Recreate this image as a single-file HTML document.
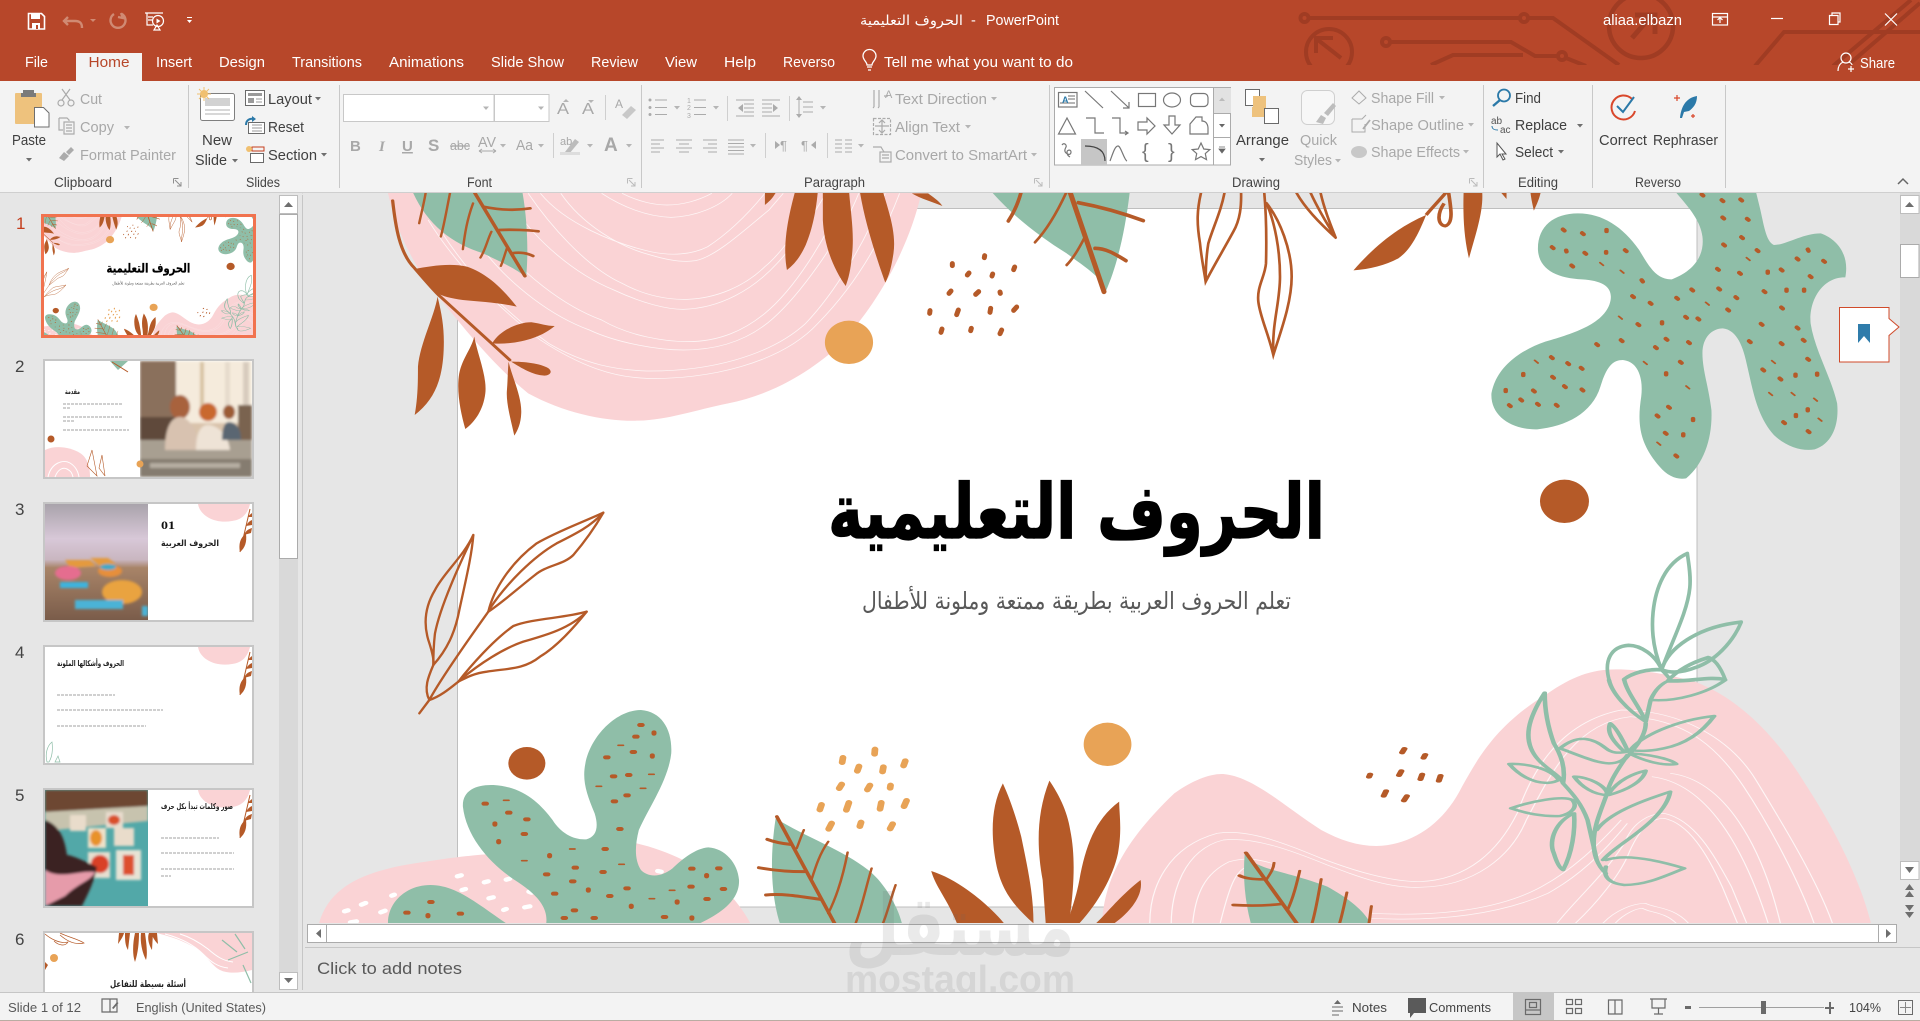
<!DOCTYPE html>
<html lang="en"><head><meta charset="utf-8"><title>PowerPoint</title>
<style>
html,body{margin:0;padding:0;width:1920px;height:1021px;overflow:hidden;background:#e6e6e6}
svg{display:block}
text{font-family:"Liberation Sans","DejaVu Sans",sans-serif;font-size:14.5px}
.w{fill:#fff}.k{fill:#404040}.g{fill:#a8a8a8}.l{font-size:13.5px;fill:#444}.s{font-size:13px;fill:#595959}
.ar{font-family:"DejaVu Sans",sans-serif}
.c{fill:#6e6e6e}.cg{fill:#b5b5b5}
.ig{fill:none;stroke:#ababab;stroke-width:1.2}
.ik{fill:none;stroke:#6a6a6a;stroke-width:1.2}
.gal{fill:none;stroke:#777;stroke-width:1.2}
</style></head><body>
<svg width="1920" height="1021" viewBox="0 0 1920 1021" xmlns="http://www.w3.org/2000/svg">
<defs>
<clipPath id="cMain"><rect x="303" y="193" width="1597" height="730"/></clipPath>
<clipPath id="cT1"><rect x="44" y="217" width="209" height="118"/></clipPath>
<clipPath id="cT6"><rect x="45" y="933" width="207" height="59"/></clipPath>
<clipPath id="cP2"><rect x="140" y="361" width="112" height="116"/></clipPath>
<clipPath id="cP3"><rect x="45" y="504" width="103" height="116"/></clipPath>
<clipPath id="cP5"><rect x="45" y="790" width="103" height="116"/></clipPath>
<filter id="bl" x="-10%" y="-10%" width="120%" height="120%"><feGaussianBlur stdDeviation="1.3"/></filter>
<linearGradient id="p3" x1="0" y1="0" x2="0" y2="1"><stop offset="0" stop-color="#a9a3ab"/><stop offset=".3" stop-color="#d8c8d8"/><stop offset=".48" stop-color="#c9b6c0"/><stop offset=".55" stop-color="#a88468"/><stop offset="1" stop-color="#7a5c4a"/></linearGradient>
<g id="corner">
<path d="M198 0C200 12 215 20 232 17C240 16 247 12 250 0Z" fill="#fad3d5"/>
<path d="M250 5L240 48" stroke="#b55a28" stroke-width="1" fill="none"/>
<path d="M240 48C238 38 242 32 246 30C247 38 245 44 240 48ZM244 31C246 26 249 25 252 24L251 29ZM246 22C248 18 250 17 252 16L252 21ZM248 13C249 11 251 10 252 9L252 13Z" fill="#b55a28"/>
</g>
<g id="art">
<!-- top-left -->
<g transform="translate(320,190) scale(.40816,.33333)">
<path d="M165 0C185 120 230 230 290 320C350 410 420 520 510 610C600 670 700 695 780 692C850 690 920 660 1000 640C1100 615 1180 560 1250 490C1340 390 1440 200 1475 0Z" fill="#fad3d5"/>
<g fill="none" stroke="#fff" stroke-width="2.2" opacity=".8">
<path d="M265 90C320 200 420 340 540 450C640 530 720 562 800 565C950 570 1130 520 1220 400C1300 300 1370 170 1420 10"/>
<path d="M300 130C380 280 470 380 560 460C650 525 730 540 800 543C950 545 1100 500 1190 400C1260 310 1330 170 1385 10"/>
<path d="M400 180C470 290 570 380 660 420C730 460 830 480 890 480C990 480 1060 440 1110 385C1170 320 1270 160 1320 10"/>
<path d="M420 130C490 250 600 350 690 390C760 440 850 455 900 455C980 455 1040 420 1090 370C1160 300 1240 150 1285 10"/>
<path d="M480 60C530 150 620 250 720 300C790 340 850 358 890 358C980 355 1060 300 1120 220C1160 170 1210 70 1240 10"/>
<path d="M510 10C560 100 650 230 740 280C800 320 860 330 900 328C970 325 1040 290 1090 230C1130 190 1190 90 1215 10"/>
<path d="M590 10C640 100 730 170 810 195C850 210 890 218 920 212C970 200 1040 120 1100 60L1135 10"/>
<path d="M540 10C600 100 720 160 810 185C860 198 910 195 950 170C1000 130 1050 70 1090 10"/>
<path d="M690 10C740 50 800 80 860 82C920 80 980 50 1010 10"/>
<path d="M740 10C780 35 820 45 850 45C890 45 930 30 960 10"/>
</g>
<path d="M225 0C260 100 320 160 400 190C440 215 480 235 505 262C510 200 510 100 495 0Z" fill="#8fbea8"/>
<g fill="none" stroke="#b55a28" stroke-linecap="round">
<path d="M375 0L502 258" stroke-width="9"/>
<path d="M400 50C440 60 480 62 515 55M440 120C470 118 510 120 535 124M470 190C490 185 510 190 522 198" stroke-width="8"/>
<path d="M375 40C360 90 355 130 350 178M420 125C410 150 405 180 393 203M458 175C452 195 448 215 443 228M320 0C310 60 305 100 296 140M260 0C255 40 248 70 243 100" stroke-width="6"/>
<path d="M178 32C185 110 195 190 232 235C260 275 285 310 295 320L465 510" stroke-width="8"/>
</g>
<g fill="#b55a28">
<path d="M232 237C270 228 320 218 360 230C410 250 450 300 482 350C440 338 390 335 350 330C320 325 300 318 288 310Z"/>
<path d="M288 320C300 380 305 420 303 480C300 570 280 630 232 675C240 620 240 570 240 530C245 460 280 380 288 320Z"/>
<path d="M378 440C385 490 410 560 405 610C400 660 380 695 356 717C345 670 335 610 340 560C345 510 370 480 378 440Z"/>
<path d="M462 515C470 560 495 620 493 670C492 700 485 720 476 737C470 700 455 640 458 600C460 570 460 540 462 515Z"/>
<path d="M422 460C440 420 490 395 520 397C540 400 555 408 575 408C540 445 480 465 422 460Z"/>
<path d="M468 515C500 515 540 520 560 535C570 545 565 555 550 557C520 555 495 535 468 515Z"/>
<path d="M1090 0L1120 0C1110 25 1100 35 1090 45Z"/>
<path d="M1165 0L1220 0C1215 70 1205 120 1190 165C1175 205 1160 225 1144 240C1135 180 1140 110 1165 0Z"/>
<path d="M1232 0L1296 0C1300 70 1310 130 1303 200C1300 240 1295 265 1288 288C1260 240 1235 170 1232 90Z"/>
<path d="M1322 0L1378 0C1395 70 1412 130 1405 190C1400 230 1395 255 1385 278C1365 210 1335 100 1322 0Z"/>
<path d="M1450 10L1490 10C1500 20 1515 30 1525 48C1500 35 1470 25 1450 10Z"/>
</g>
<ellipse cx="1296" cy="457" rx="59" ry="65" fill="#e8a356"/>
</g>
<!-- top-middle -->
<g transform="translate(940,190) scale(.33333)">
<path d="M150 0C220 80 300 140 380 190C420 220 450 240 470 260L497 305C530 230 555 130 570 0Z" fill="#8fbea8"/>
<g fill="none" stroke="#b55a28" stroke-linecap="round">
<path d="M388 0L492 305" stroke-width="15"/>
<path d="M415 38C480 50 550 70 610 92M465 175C500 175 530 195 558 212" stroke-width="11"/>
<path d="M380 5C350 70 320 120 285 157M435 140C420 170 400 205 380 225" stroke-width="8"/>
<path d="M245 0C235 40 220 70 205 93" stroke-width="11"/>
<g stroke-width="8">
<path d="M785 0C770 60 770 100 780 160C785 210 792 240 797 275C820 230 850 180 880 125C900 90 905 50 903 0M855 0C845 60 820 110 805 160C800 190 797 230 797 275"/>
<path d="M972 0C978 60 980 140 978 220C975 260 950 290 955 335C960 380 985 430 1000 495C1020 430 1055 340 1055 260C1055 180 1020 90 980 40M980 40C1005 100 1020 180 1020 260C1020 340 995 400 1000 495"/>
<path d="M1065 0C1090 50 1140 100 1187 143C1170 100 1150 50 1140 0M1108 0C1130 50 1160 100 1187 143"/>
</g>
</g>
<path fill="none" stroke="#b55a28" stroke-width="15" stroke-linecap="round" d="M37 221l0 6M134 197l-1 6M87 249l-5 6M158 252l-2 6M224 231l-3 8M33 303l-6 7M116 305l-9 8M180 306l1 4M55 360l-5 14M152 355l-2 12M230 351l-9 10M6 417l-3 10M94 415l-2 7M185 420l-5 11M-30 362l-1 8"/>
</g>
<!-- top-right -->
<g transform="translate(1280,190) scale(.40816,.33333)">
<g fill="#b55a28">
<path d="M180 241C230 170 290 110 358 75C340 130 320 180 290 205C260 225 220 238 180 241Z"/>
<path d="M450 0L495 0C500 60 480 130 463 205C450 140 448 70 450 0Z"/>
<path d="M536 0L555 0L555 27Z"/><path d="M613 0L640 0C635 30 628 45 622 62C618 40 615 25 613 0Z"/>
</g>
<path d="M358 75C375 50 395 25 412 0M412 0C420 60 425 100 405 108C385 105 385 70 402 40" fill="none" stroke="#b55a28" stroke-width="9"/>
<path d="M965 0C1000 50 1030 90 1035 140C1040 190 1020 240 960 268C920 270 900 220 880 180C840 110 790 70 730 70C670 70 630 110 632 180C635 240 680 265 740 268C790 272 815 290 810 330C800 400 720 430 650 455C590 480 530 530 518 610C515 680 570 720 630 718C700 710 765 670 785 590C800 530 815 510 840 510C880 515 890 570 885 620C875 700 880 760 930 830C950 860 975 870 995 865C1040 820 1060 740 1057 660C1050 590 1035 540 1035 490C1035 440 1060 415 1085 415C1120 420 1135 470 1145 530C1160 610 1170 680 1210 735C1240 770 1280 785 1310 778C1355 760 1370 700 1365 640C1350 560 1310 480 1300 400C1295 330 1330 260 1385 262C1395 200 1370 150 1325 130C1280 130 1240 165 1210 165C1190 155 1185 100 1175 50L1165 0Z" fill="#8fbea8"/>
<path fill="none" stroke="#b55a28" stroke-width="11" stroke-linecap="round" d="M693 118l4 4M740 129l4 4M800 119l0 5M666 171l4 4M701 181l1 4M746 188l4 4M799 185l0 4M845 180l4 4M714 226l4 4M886 270l3 5M863 318l4 4M906 338l4 4M971 323l4 4M1008 298l4 4M1074 295l4 4M1116 321l4 4M1096 358l4 4M1071 236l4 4M1125 248l4 4M1086 163l4 4M1168 180l4 4M1130 141l4 4M1084 82l4 4M1144 86l4 4M1128 28l4 4M1082 30l4 4M1033 13l4 4M1293 178l2 5M1266 205l4 4M1331 212l4 4M1195 244l0 5M1227 238l4 4M1298 258l4 4M1185 303l4 4M1241 298l0 5M1284 298l0 5M1228 352l4 4M1178 401l4 4M1266 412l4 4M1023 385l4 4M993 380l4 4M936 396l0 5M876 402l4 4M945 446l4 4M1000 456l4 4M919 471l4 4M835 450l4 4M775 462l4 4M1149 453l4 4M1227 459l4 4M1281 449l4 4M1292 506l4 4M1182 538l4 4M1224 565l4 4M1263 553l0 5M1316 550l0 5M1293 657l0 5M1264 674l0 5M1233 696l4 4M1293 723l4 4M980 515l4 4M946 549l0 5M951 650l4 4M923 676l4 4M1012 686l0 5M943 728l4 4M988 732l0 5M969 796l4 4M664 501l4 4M704 519l4 4M737 533l4 4M596 551l0 5M667 560l4 4M696 588l4 4M739 598l4 4M553 599l0 5M620 601l4 4M589 628l4 4M561 645l4 4M630 641l4 4M676 644l4 4"/>
<path fill="none" stroke="#b55a28" stroke-width="5" stroke-linecap="round" d="M784 218l8 8M834 241l8 8M1043 337l8 8M830 379l8 8M1143 203l8 8M1205 512l8 8M891 515l8 8M995 588l8 8M1198 608l8 8M1253 608l8 8M1308 625l8 8M1319 685l8 8M924 757l8 8M624 511l8 8"/>
<ellipse cx="697" cy="934" rx="60" ry="65" fill="#b55a28"/>
</g>
<!-- outline leaf left -->
<g transform="translate(400,500) scale(.33333)" fill="none" stroke="#b55a28" stroke-width="7" stroke-linecap="round" stroke-linejoin="round">
<path d="M58 640L88 600C120 540 190 440 265 335"/>
<path d="M265 335C280 270 330 190 410 130C470 95 540 70 610 38C580 90 550 130 520 165C490 195 440 195 405 225C360 260 310 305 265 335"/>
<path d="M270 325C320 250 400 170 470 130C530 100 570 80 610 38"/>
<path d="M175 545C210 500 280 420 340 378C400 355 490 355 560 335C520 385 470 440 420 470C370 510 320 505 260 515C220 520 195 535 175 545"/>
<path d="M180 540C240 490 310 445 370 425C440 405 510 385 560 335"/>
<path d="M88 600C120 590 150 565 175 545"/>
<path d="M220 105C190 170 130 220 105 270C75 320 70 370 85 420C95 450 103 480 100 495C140 450 165 400 178 330C195 250 215 170 220 105Z"/>
<path d="M220 105C180 190 120 320 105 400C100 440 100 470 100 495"/>
<path d="M100 495C85 530 70 565 88 600"/>
</g>
<!-- bottom-left -->
<g transform="translate(300,680) scale(.42092,.33333)">
<path d="M45 730C70 620 150 570 300 545C370 530 420 525 470 520L800 490C900 520 1010 590 1070 730Z" fill="#fad3d5"/>
<path fill="none" stroke="#fff" stroke-width="13" stroke-linecap="round" d="M374 589l9 -3M438 607l9 -3M490 599l8 -3M544 635l6 3M449 655l10 -3M484 690l6 -3M534 682l12 -3M385 630l8 -3M218 647l6 -3M146 674l10 -5M106 694l8 -3M192 697l10 -5M120 727l14 -3M850 573l8 2"/>
<path d="M209 730C208 670 250 615 310 615C370 615 420 670 490 730Z" fill="#8fbea8"/>
<path d="M585 730C590 680 560 640 510 600C450 550 395 470 387 380C385 330 420 313 460 315C530 320 570 370 600 420C620 460 650 480 680 478C705 470 710 440 700 400C680 340 670 300 678 250C690 170 750 90 810 90C860 95 885 150 882 220C875 300 830 380 805 450C795 500 795 540 810 570C830 595 860 590 885 565C910 535 940 505 970 502C1010 505 1040 550 1043 600C1045 660 1000 700 950 730Z" fill="#8fbea8"/>
<path fill="none" stroke="#b55a28" stroke-width="12" stroke-linecap="round" d="M807 135l6 0M841 157l0 4M795 170l6 0M789 216l6 0M726 232l6 0M837 226l0 4M742 289l6 0M778 285l6 0M774 346l6 0M744 364l6 0M437 371l6 0M493 398l6 0M536 418l6 0M463 430l0 4M530 462l6 0M472 483l0 4M757 447l6 0M722 507l6 0M593 525l0 4M651 563l6 0M583 583l6 0M717 576l6 0M645 604l6 0M928 566l6 0M992 565l6 0M966 585l0 4M774 625l6 0M685 628l0 4M602 641l6 0M733 648l6 0M926 620l6 0M1003 627l6 0M964 657l6 0M896 664l0 4M787 677l0 4M649 691l6 0M625 714l6 0M696 714l6 0M863 711l6 0M931 712l0 4M308 666l6 0M251 698l6 0M304 705l0 4M378 701l6 0"/>
<path fill="none" stroke="#b55a28" stroke-width="5" stroke-linecap="round" d="M756 196l12 0M704 319l12 0M809 325l12 0M829 283l12 0M484 361l12 0M641 507l12 0M527 542l12 0M758 553l12 0M878 631l12 0M830 656l12 0"/>
<ellipse cx="539" cy="250" rx="44" ry="49" fill="#b55a28"/>
<path fill="none" stroke="#e8a356" stroke-width="16" stroke-linecap="round" d="M1290 233l-2 14M1366 208l-1 14M1328 259l-4 14M1386 261l-2 14M1438 243l-4 14M1287 313l-6 12M1354 316l-6 13M1403 316l-1 8M1239 374l-4 15M1304 368l-6 22M1381 368l-3 19M1441 362l-6 17M1263 430l-7 17M1333 427l-3 12M1408 432l-6 14"/>
<path d="M1130 415C1200 470 1290 510 1350 570C1390 610 1420 680 1430 730L1140 730C1120 650 1115 540 1130 415Z" fill="#8fbea8"/>
<g fill="none" stroke="#b55a28" stroke-linecap="round">
<path d="M1133 410L1270 730" stroke-width="9"/>
<path d="M1165 493C1140 490 1125 485 1110 478M1198 575C1160 575 1120 570 1090 563M1235 658C1190 650 1150 640 1107 645" stroke-width="9"/>
<path d="M1197 450C1190 470 1185 490 1180 505M1255 485C1235 520 1225 560 1215 600M1301 517C1290 590 1275 650 1255 700M1358 565C1345 620 1335 680 1320 730M1415 615C1405 650 1395 700 1385 730" stroke-width="6"/>
</g>
</g>
<!-- bottom-right -->
<g transform="translate(960,680) scale(.61224,.33333)">
<path d="M232 730C235 600 270 480 350 340C380 300 410 280 430 282C480 290 530 380 590 450C620 480 650 498 680 498C740 495 790 430 820 320C850 220 880 130 960 40C1000 -10 1030 -32 1072 -32C1120 -32 1170 -10 1200 5C1280 60 1340 190 1380 310C1430 450 1470 600 1488 730Z" fill="#fad3d5"/>
<g fill="none" stroke="#fff" stroke-width="2" opacity=".8">
<path d="M310 730C310 620 340 500 420 460C470 445 530 490 590 535C640 570 700 605 750 605C830 600 880 510 910 400C930 300 970 130 1080 90C1180 90 1260 180 1300 300C1340 420 1400 600 1425 730"/>
<path d="M345 730C345 640 365 510 430 480C480 470 540 510 600 555C650 590 700 625 750 622C840 620 900 530 925 420C960 300 1000 130 1095 110C1190 120 1240 210 1280 320C1320 430 1370 600 1395 730"/>
<path d="M380 730C385 640 400 580 440 545C470 530 490 540 510 550M425 730C440 620 450 570 470 560"/>
<path d="M975 730C1010 650 1050 590 1085 490C1100 420 1130 400 1150 400C1200 420 1230 520 1260 620L1285 730"/>
<path d="M1005 730C1040 670 1075 590 1090 530C1110 440 1130 415 1150 415C1190 430 1220 520 1245 620L1270 730"/>
<path d="M1050 730C1070 690 1100 670 1120 670C1135 685 1165 680 1190 730M1070 730C1085 700 1105 685 1115 685C1130 700 1150 695 1170 730"/>
<path d="M670 700C780 710 880 690 950 620C1000 570 1040 500 1080 420M670 715C780 725 880 705 960 640C1010 590 1050 520 1090 430"/>
<path d="M1160 280C1250 300 1310 500 1340 730M1130 290C1220 310 1280 500 1320 730"/>
</g>
<ellipse cx="241" cy="193" rx="39" ry="65" fill="#e8a356"/>
<path fill="none" stroke="#b55a28" stroke-width="10" stroke-linecap="round" d="M726 206l-4 12M760 224l-3 10M670 283l-2 8M721 273l-4 13M755 283l-3 15M785 287l-3 16M696 333l-4 15M730 348l-5 14"/>
<g fill="#b55a28">
<path d="M70 310C50 380 50 470 60 560C70 640 90 680 120 730C120 640 110 560 100 470C90 400 80 350 70 310Z"/>
<path d="M146 302C125 400 125 500 135 600L140 730L178 730C185 640 190 540 180 450C175 390 160 340 146 302Z"/>
<path d="M260 365C220 420 205 500 195 600C190 650 180 700 175 730L195 730C225 670 250 590 258 520C265 450 260 400 260 365Z"/>
<path d="M295 600C260 650 240 700 222 730L252 730C275 700 300 650 295 600Z"/>
<path d="M-47 573C0 600 50 680 72 730L-5 730C-20 660 -40 620 -47 573Z"/>
</g>
<path d="M465 520C480 570 530 570 600 620C630 650 660 690 670 730L475 730C465 660 462 590 465 520Z" fill="#8fbea8"/>
<g fill="none" stroke="#b55a28" stroke-linecap="round">
<path d="M467 518L550 730" stroke-width="7"/>
<path d="M497 598C480 598 465 595 457 587M525 672C500 677 475 678 447 675" stroke-width="8"/>
<path d="M513 548C512 570 505 585 500 600M555 572C550 610 545 650 535 690M590 597C585 650 580 700 575 730M632 637C628 670 625 700 620 730M672 678C670 700 670 710 668 730" stroke-width="5"/>
</g>
<g fill="none" stroke="#8fbea8" stroke-width="7.500" stroke-linecap="round" stroke-linejoin="round">
<path d="M1120 130C1120 170 1100 210 1085 240C1070 280 1060 310 1055 350C1045 400 1035 440 1035 490C1035 520 1040 555 1055 580"/>
<path d="M1060 0C1065 40 1090 90 1120 125L1128 60C1135 30 1145 10 1160 0M1130 60C1170 65 1220 40 1250 0M1085 0C1090 40 1110 80 1120 125"/>
<path d="M1095 210C1110 170 1170 120 1232 108C1215 150 1190 190 1150 205C1130 213 1110 215 1095 210"/>
<path d="M1090 210C1080 170 1070 140 1062 130C1055 160 1070 190 1085 215"/>
<path d="M1095 220C1120 222 1160 235 1170 252C1150 258 1120 245 1095 222"/>
<path d="M980 205C1010 160 1035 175 1055 205C1065 220 1075 220 1090 215M980 205C1010 225 1040 250 1060 250C1075 250 1085 240 1090 225"/>
<path d="M955 38C930 110 915 180 945 240C960 270 980 285 985 310C990 260 980 220 970 190C960 140 955 90 955 38Z"/>
<path d="M985 310C1000 340 1015 370 1025 420C1030 460 1035 500 1040 540"/>
<path d="M897 252C925 250 965 265 978 300C960 318 925 310 897 252Z"/>
<path d="M1003 290C1025 290 1055 315 1058 345C1035 345 1015 320 1003 290ZM1060 340C1075 300 1100 280 1120 272C1115 305 1090 330 1060 345"/>
<path d="M900 385C930 365 985 345 1000 360C1010 380 1000 400 980 408C950 410 925 400 900 385Z"/>
<path d="M1003 400C975 420 960 480 970 520C975 550 980 565 985 570C1000 520 1005 450 1003 400Z"/>
<path d="M1040 450C1060 400 1110 365 1160 335C1155 390 1120 440 1090 480C1075 500 1060 520 1050 540"/>
<path d="M1055 540C1080 525 1120 530 1183 565C1150 590 1120 615 1085 615C1060 610 1050 590 1055 560"/>
</g>
</g>
<!-- plant top -->
<g transform="scale(1.2245)" fill="none" stroke="#8fbea8" stroke-width="3" stroke-linecap="round" stroke-linejoin="round">
<path d="M1378 452C1360 460 1352 480 1350 500C1348 520 1352 535 1357 547C1366 522 1378 500 1380 480C1381 470 1379 460 1378 452Z"/>
<path d="M1357 547C1362 530 1385 512 1422 508C1415 525 1400 540 1385 545C1375 549 1365 550 1357 547Z"/>
<path d="M1314 555C1310 540 1315 528 1330 527C1340 527 1352 535 1357 547C1345 546 1332 550 1326 555"/>
<path d="M1364 555C1362 552 1360 550 1357 547M1362 556C1380 557 1395 552 1409 555C1404 542 1399 538 1395 537C1385 540 1372 545 1362 556"/>
</g>
<!-- slide text -->
<text class="ar" x="828" y="538" fill="#000" stroke="#000" stroke-width="1.200" textLength="497" lengthAdjust="spacingAndGlyphs" style="font-size:76px;font-weight:700">الحروف التعليمية</text>
<text class="ar" x="862" y="609" fill="#595959" textLength="429" lengthAdjust="spacingAndGlyphs" style="font-size:24px">تعلم الحروف العربية بطريقة ممتعة وملونة للأطفال</text>
</g>
</defs>

<!-- window base -->
<rect width="1920" height="1021" fill="#e6e6e6"/>
<rect width="1920" height="81" fill="#b7472a"/>
<!-- circuit pattern -->
<svg x="1280" y="0" width="640" height="65" viewBox="1280 0 640 65" overflow="hidden">
<g fill="none" stroke="#a03c23" stroke-width="4">
<circle cx="1304.500" cy="18" r="4"/><circle cx="1524" cy="18" r="4"/>
<path d="M1309 18H1520M1528 18H1553L1619 65"/>
<circle cx="1386" cy="42" r="4"/><circle cx="1562" cy="56" r="4"/>
<path d="M1390 42H1511L1535 56H1558M1566 58L1586 66M1431 65L1453 55H1523"/>
<circle cx="1329" cy="52" r="23" stroke-width="4"/>
<path d="M1341 58L1318 40M1316 53V38H1333" stroke-width="4"/>
<circle cx="1641" cy="26" r="32" stroke-width="4.500"/>
<path d="M1632 38L1652 15M1635 15H1655V34" stroke-width="5"/>
<path d="M1755 66L1784 32H1920M1833 66L1911 0M1847 66L1920 3"/>
</g>
</svg>
<!-- QAT -->
<g>
<path d="M28.500 13.500h13l3 3v12.500h-16z" fill="none" stroke="#fff" stroke-width="1.600"/><rect x="31" y="14" width="9" height="5" fill="#fff"/><rect x="32" y="23" width="8" height="6" fill="#fff"/><rect x="36" y="25" width="2" height="4" fill="#b7472a"/>
<path d="M68 17l-4 4 4 4M64 21h11c5 0 7 2 7 7" fill="none" stroke="#d08a73" stroke-width="2.400"/>
<path d="M90 19h6l-3 3z" fill="#d08a73"/>
<path d="M122 14a7.500 7.500 0 1 1-8 0M121 13l2 5-5-1" fill="none" stroke="#d08a73" stroke-width="2.400"/>
<g fill="none" stroke="#fff" stroke-width="1.200"><path d="M145 13h18M147 13v12h6M148 17h5M148 20h4"/><circle cx="158" cy="21" r="5.500"/><path d="M154 30h6l-3-5z"/></g><path d="M156.500 18.500l4 2.500-4 2.500z" fill="#fff"/>
<path d="M187 17h5v1h-5zM187 20h5l-2.500 3z" fill="#fff"/>
</g>
<!-- title -->
<text class="ar w" x="860" y="25" textLength="103" lengthAdjust="spacingAndGlyphs" style="font-size:14px">الحروف التعليمية</text>
<text class="w" x="971" y="25">-</text>
<text class="w" x="986" y="25" textLength="73" lengthAdjust="spacingAndGlyphs">PowerPoint</text>
<text class="w" x="1603" y="25" textLength="79" lengthAdjust="spacingAndGlyphs">aliaa.elbazn</text>
<g fill="none" stroke="#fff" stroke-width="1.200">
<rect x="1712.500" y="13.500" width="15" height="11.500"/><path d="M1712.500 17h15M1720 23v-5M1717.500 20l2.500-2.500 2.500 2.500"/>
<path d="M1771 18.500h12"/><rect x="1829.500" y="15.500" width="8.500" height="9"/><path d="M1832 15v-2h8v9h-2"/>
<path d="M1885 13.500l12 12M1897 13.500l-12 12"/>
<circle cx="1846" cy="58" r="5"/><path d="M1838 71c0-6 3-8 5-9M1849 62c2 1 3 2 3 3M1851 66v6M1848 69h6"/>
</g>
<text class="w" x="1860" y="68" textLength="35" lengthAdjust="spacingAndGlyphs">Share</text>
<!-- tabs -->
<rect x="76" y="53" width="66" height="28" fill="#f3f3f3"/>
<g class="w">
<text class="w" x="25" y="67" textLength="23" lengthAdjust="spacingAndGlyphs">File</text>
<text x="88.500" y="67" fill="#b7472a" textLength="41" lengthAdjust="spacingAndGlyphs">Home</text>
<text class="w" x="156" y="67" textLength="36" lengthAdjust="spacingAndGlyphs">Insert</text>
<text class="w" x="219" y="67" textLength="46" lengthAdjust="spacingAndGlyphs">Design</text>
<text class="w" x="292" y="67" textLength="70" lengthAdjust="spacingAndGlyphs">Transitions</text>
<text class="w" x="389" y="67" textLength="75" lengthAdjust="spacingAndGlyphs">Animations</text>
<text class="w" x="491" y="67" textLength="73" lengthAdjust="spacingAndGlyphs">Slide Show</text>
<text class="w" x="591" y="67" textLength="47" lengthAdjust="spacingAndGlyphs">Review</text>
<text class="w" x="665" y="67" textLength="32" lengthAdjust="spacingAndGlyphs">View</text>
<text class="w" x="724" y="67" textLength="32" lengthAdjust="spacingAndGlyphs">Help</text>
<text class="w" x="783" y="67" textLength="52" lengthAdjust="spacingAndGlyphs">Reverso</text>
<text class="w" x="884" y="67" textLength="189" lengthAdjust="spacingAndGlyphs">Tell me what you want to do</text>
</g>
<path d="M867 65c0-3-4-5-4-9a6.500 6.500 0 0 1 13 0c0 4-4 6-4 9zM867 67h5M868 70h3" fill="none" stroke="#fff" stroke-width="1.300"/>
<!-- ribbon -->
<rect y="81" width="1920" height="111" fill="#f3f3f3"/>
<rect y="192" width="1920" height="1.500" fill="#cfcfcf"/>
<g fill="#c8c8c8"><rect x="188" y="85" width="1" height="103"/><rect x="339" y="85" width="1" height="103"/><rect x="641" y="85" width="1" height="103"/><rect x="1049" y="85" width="1" height="103"/><rect x="1483" y="85" width="1" height="103"/><rect x="1592" y="85" width="1" height="103"/><rect x="1725" y="85" width="1" height="103"/></g>
<g class="l">
<text class="l" x="54" y="187" textLength="58" lengthAdjust="spacingAndGlyphs">Clipboard</text>
<text class="l" x="246" y="187" textLength="34" lengthAdjust="spacingAndGlyphs">Slides</text>
<text class="l" x="467" y="187" textLength="25" lengthAdjust="spacingAndGlyphs">Font</text>
<text class="l" x="804" y="187" textLength="61" lengthAdjust="spacingAndGlyphs">Paragraph</text>
<text class="l" x="1232" y="187" textLength="48" lengthAdjust="spacingAndGlyphs">Drawing</text>
<text class="l" x="1518" y="187" textLength="40" lengthAdjust="spacingAndGlyphs">Editing</text>
<text class="l" x="1635" y="187" textLength="46" lengthAdjust="spacingAndGlyphs">Reverso</text>
</g>
<g fill="none" stroke="#8f8f8f"><path d="M173.500 178.500h5M173.500 178.500v5M175 180l6 6M181 182v4h-4"/><path d="M627.500 178.500h5M627.500 178.500v5M629 180l6 6M635 182v4h-4" stroke="#bbb"/><path d="M1034.500 178.500h5M1034.500 178.500v5M1036 180l6 6M1042 182v4h-4" stroke="#bbb"/><path d="M1469.500 178.500h5M1469.500 178.500v5M1471 180l6 6M1477 182v4h-4" stroke="#bbb"/><path d="M1898 184l5-5 5 5" stroke="#666" stroke-width="1.500"/></g>
<!-- Clipboard -->
<rect x="15" y="93" width="27" height="31" rx="1" fill="#eec27d"/><path d="M23 93h11v-3h-11z M21 93h15v4h-15z" fill="#7a7a7a"/>
<path d="M34.500 107.500h9l5.500 5.500v14h-14.500z" fill="#fff" stroke="#6f6f6f"/>
<text class="k" x="12" y="145" textLength="34" lengthAdjust="spacingAndGlyphs">Paste</text><path class="c" d="M26 158h6l-3 3.500z"/>
<g class="ig"><circle cx="61" cy="103" r="3"/><circle cx="71" cy="103" r="3"/><path d="M62 100l8-11M70 100l-8-11"/><path d="M59 118h8l2 2v1M59 118v12h4M64 122h10v12h-10zM66 125h6M66 128h6M66 131h6"/></g>
<path d="M59 158l5-6 5 4-5 5zM66 152l5-5 3 3-5 5z" fill="#ababab"/>
<text class="g" x="80" y="104" textLength="22" lengthAdjust="spacingAndGlyphs">Cut</text>
<text class="g" x="80" y="132" textLength="34" lengthAdjust="spacingAndGlyphs">Copy</text><path class="cg" d="M124 126h6l-3 3.500z"/>
<text class="g" x="80" y="160" textLength="96" lengthAdjust="spacingAndGlyphs">Format Painter</text>
<!-- Slides -->
<rect x="200.500" y="93.500" width="34" height="27" rx="2" fill="#fff" stroke="#7f7f7f"/><rect x="205" y="98" width="25" height="8" fill="#d2d2d2"/><path d="M205 110h25M205 114h25" stroke="#b0b0b0"/>
<circle cx="204" cy="94" r="4" fill="#f0c070"/><path d="M204 87v14M197 94h14M199 89l10 10M209 89l-10 10" stroke="#f0c070"/>
<text class="k" x="202" y="145" textLength="30" lengthAdjust="spacingAndGlyphs">New</text>
<text class="k" x="195" y="165" textLength="32" lengthAdjust="spacingAndGlyphs">Slide</text><path class="c" d="M232 159h6l-3 3.500z"/>
<rect x="245.500" y="90.500" width="19" height="15" fill="#fff" stroke="#6a6a6a"/><path d="M248 93h14v3h-14zM248 98h6v5h-6z" fill="#9a9a9a"/><path d="M256 99h6M256 102h6" stroke="#9a9a9a"/>
<text class="k" x="268" y="104" textLength="44" lengthAdjust="spacingAndGlyphs">Layout</text><path class="c" d="M315 97h6l-3 3.500z"/>
<rect x="248.500" y="122.500" width="16" height="11" fill="#fff" stroke="#6a6a6a"/><path d="M252 125h10M252 128h10M252 131h10" stroke="#999"/><path d="M246 125c0-5 4-7 8-6" fill="none" stroke="#2b79a8" stroke-width="2"/><path d="M252 116l4 3-4 3z" fill="#2b79a8"/>
<text class="k" x="268" y="132" textLength="36" lengthAdjust="spacingAndGlyphs">Reset</text>
<rect x="250.500" y="153.500" width="13" height="9" fill="#fff" stroke="#6a6a6a"/><rect x="252" y="147" width="12" height="4" fill="none" stroke="#c43e1c"/><circle cx="249" cy="149" r="3" fill="#f0c070"/>
<text class="k" x="268" y="160" textLength="49" lengthAdjust="spacingAndGlyphs">Section</text><path class="c" d="M321 153h6l-3 3.500z"/>
<!-- Font -->
<rect x="343.500" y="94.500" width="150.500" height="27" fill="#fff" stroke="#c8c8c8"/><rect x="494.500" y="94.500" width="54.500" height="27" fill="#fff" stroke="#c8c8c8"/>
<path class="cg" d="M483 106.500h6l-3 3.500zM538 106.500h6l-3 3.500z"/>
<text class="g" x="557" y="114" textLength="12" style="font-size:16px" lengthAdjust="spacingAndGlyphs">A</text><path class="cg" d="M566 99l3 3h-6z"/>
<text class="g" x="582" y="114" textLength="12" style="font-size:16px" lengthAdjust="spacingAndGlyphs">A</text><path class="cg" d="M588 100h6l-3 3z"/>
<rect x="605" y="95" width="1" height="25" fill="#cfcfcf"/><text class="g" x="615" y="108" style="font-size:12px">A</text><path d="M622 115l9-9 5 4-9 9z" fill="#c8c8c8"/>
<g class="g">
<text class="g" x="350" y="151" style="font-size:15px;font-weight:700">B</text>
<text class="g" x="379" y="151" style="font-size:15px;font-style:italic;font-weight:700;font-family:'Liberation Serif',serif">I</text>
<text class="g" x="402" y="151" style="font-size:15px;font-weight:700;text-decoration:underline">U</text>
<text class="g" x="428" y="151" style="font-size:17px;font-weight:700">S</text>
<text class="g" x="450" y="150" textLength="20" lengthAdjust="spacingAndGlyphs" style="font-size:13px;text-decoration:line-through">abc</text>
<text class="g" x="478" y="147" textLength="18" lengthAdjust="spacingAndGlyphs">AV</text>
<text class="g" x="516" y="150" textLength="17" lengthAdjust="spacingAndGlyphs">Aa</text>
<text class="g" x="560" y="145" style="font-size:11px">ab</text>
<text class="g" x="604" y="151" style="font-size:19px;font-weight:700">A</text>
</g>
<path d="M479 151h17M479 151l3-2M479 151l3 2M496 151l-3-2M496 151l-3 2" stroke="#aaa" fill="none"/>
<path d="M565 152l10-13 4 3-10 12z" fill="#bcbcbc"/><rect x="560" y="152" width="20" height="3" fill="#ddd"/>
<path class="cg" d="M500 144h6l-3 3.500zM538 144h6l-3 3.500zM587 144h6l-3 3.500zM626 144h6l-3 3.500z"/>
<rect x="553" y="133" width="1" height="25" fill="#cfcfcf"/>
<!-- Paragraph -->
<g fill="#ababab"><circle cx="650" cy="100" r="1.500"/><circle cx="650" cy="107.500" r="1.500"/><circle cx="650" cy="114.500" r="1.500"/></g>
<g stroke="#ababab" fill="none"><path d="M655 100h12M655 107.500h12M655 114.500h12"/><path d="M694 100h12M694 107.500h12M694 114.500h12"/>
<path d="M736 100h18M744 104h10M744 108h10M744 112h10M736 116h18"/><path d="M762 100h18M762 104h10M762 108h10M762 112h10M762 116h18"/>
<path d="M803 102h10M803 107h10M803 112h10M799 99v16"/>
<path d="M651 140h13M651 144h9M651 148h13M651 152h9"/><path d="M676 140h16M679 144h10M676 148h16M679 152h10"/><path d="M703 140h14M708 144h9M703 148h14M708 152h9"/><path d="M728 140h16M728 143.500h16M728 147h16M728 150.500h16M728 154h16"/>
<path d="M835 140h7M845 140h7M835 144h7M845 144h7M835 148h7M845 148h7M835 152h7M845 152h7"/></g>
<text x="687" y="103" fill="#ababab" style="font-size:7px">1</text><text x="687" y="110" fill="#ababab" style="font-size:7px">2</text><text x="687" y="118" fill="#ababab" style="font-size:7px">3</text>
<path d="M743 104v8l-5-4zM773 104v8l5-4zM799 96l-3 4h6zM799 118l-3-4h6zM775 141v8l5-4zM816 141v8l-5-4z" fill="#ababab"/>
<text class="g" x="780" y="150" style="font-size:13px">¶</text><text class="g" x="801" y="150" style="font-size:13px">¶</text>
<path class="cg" d="M674 106h6l-3 3.500zM713 106h6l-3 3.500zM820 106h6l-3 3.500zM750 144h6l-3 3.500zM858 144h6l-3 3.500zM991 97h6l-3 3.500zM965 125h6l-3 3.500zM1031 153h6l-3 3.500z"/>
<g fill="#cfcfcf"><rect x="727" y="96" width="1" height="25"/><rect x="789" y="96" width="1" height="25"/><rect x="765" y="133" width="1" height="25"/><rect x="827" y="133" width="1" height="25"/></g>
<g class="ig"><path d="M874 90v17M879 90v17M884 96h4M873 107l1 1M878 107l1 1"/><rect x="873.500" y="118.500" width="17" height="16" stroke-dasharray="3 1.500"/><path d="M882 120v13M879 123l3-3 3 3M879 130l3 3 3-3M875 126h14"/><rect x="880" y="152" width="11" height="10"/><path d="M873 147h8l3 5"/><path d="M882 155h7M882 158h7"/></g>
<text class="g" x="885" y="98" style="font-size:11px">A</text>
<text class="g" x="895" y="104" textLength="92" lengthAdjust="spacingAndGlyphs">Text Direction</text>
<text class="g" x="895" y="132" textLength="65" lengthAdjust="spacingAndGlyphs">Align Text</text>
<text class="g" x="895" y="160" textLength="132" lengthAdjust="spacingAndGlyphs">Convert to SmartArt</text>
<!-- Gallery -->
<rect x="1054.500" y="87.500" width="176" height="77.500" fill="#fff" stroke="#ababab"/>
<rect x="1081" y="139" width="26" height="26" fill="#c6c6c6"/>
<rect x="1213" y="88" width="18" height="25" fill="#e2e2e2"/>
<path d="M1213.500 87.500v78M1213.500 113.500h17.500M1213.500 137.500h17.500" stroke="#ababab"/>
<path d="M1219 101h6l-3-3.500z" fill="#bbb"/><path d="M1219 124h6l-3 3.500z" fill="#666"/><path d="M1219 147h6M1219 149h6l-3 4z" stroke="#666" fill="#666" stroke-width=".8"/>
<g class="gal">
<rect x="1058.500" y="92.500" width="18.500" height="14.500"/><path d="M1068 96h7M1068 99h7M1060 103h15" stroke="#8a8a8a"/>
<path d="M1085 91l18 17"/><path d="M1111 91l18 17M1129 102v6h-6"/>
<rect x="1138.500" y="93.500" width="17" height="13"/><ellipse cx="1172" cy="100" rx="8.500" ry="7"/><rect x="1190.500" y="93.500" width="17.500" height="13" rx="4"/>
<path d="M1058.500 134h17l-8.500-16z"/><path d="M1086 118h9v15h9"/><path d="M1112 118h8v15h8M1125 131l3 2-3 2"/>
<path d="M1138 122h9v-4l8 8-8 8v-4h-9z"/><path d="M1169 116h6v9h5l-8 9-8-9h5z"/><path d="M1190 134v-10l6-7h6v4c6 0 6 7 6 7v6z"/>
<path d="M1062 145c2-3 5 0 4 2s-2 4 0 6 5 2 5-1-4-2-4 0 1 4 3 5"/>
<path d="M1085 146c10 0 20 3 20 15" stroke="#444"/>
<path d="M1110 161c3-8 5-15 8-15s6 14 9 15"/>
<path d="M1201 143l2.800 6 6 .6-4.500 4 1.200 6-5.500-3-5.500 3 1.200-6-4.500-4 6-.6z"/>
</g>
<text x="1142" y="158" style="font-size:20px" fill="#777">{</text><text x="1168" y="158" style="font-size:20px" fill="#777">}</text>
<text x="1062" y="103" style="font-size:9px;font-weight:700" fill="#2b79a8">A</text>
<!-- Arrange -->
<rect x="1245.500" y="89.500" width="14" height="16" fill="#fff" stroke="#6a6a6a"/><rect x="1253" y="96" width="13" height="14" fill="#eec27d"/><rect x="1252" y="107" width="13" height="10" fill="#eec27d"/><rect x="1264.500" y="108.500" width="14" height="15" fill="#fff" stroke="#6a6a6a"/>
<text class="k" x="1236" y="145" textLength="53" lengthAdjust="spacingAndGlyphs">Arrange</text><path class="c" d="M1259 158h6l-3 3.500z"/>
<rect x="1301.500" y="90.500" width="33" height="34" rx="6" fill="#f7f7f7" stroke="#cfcfcf"/><path d="M1316 122l5-7 5 3-3 6zM1324 113l9-10 3 3-8 10z" fill="#bdbdbd"/>
<text class="g" x="1300" y="145" textLength="37" lengthAdjust="spacingAndGlyphs">Quick</text>
<text class="g" x="1294" y="165" textLength="38" lengthAdjust="spacingAndGlyphs">Styles</text><path class="cg" d="M1335 159h6l-3 3.500z"/>
<path d="M1352 98l7-7 7 7-7 6z" fill="none" stroke="#ababab"/><path d="M1352 119h10l4-4M1352 119v13h13v-8" fill="none" stroke="#ababab"/><path d="M1363 129l7-9" stroke="#ababab" stroke-width="1.800"/><ellipse cx="1359" cy="152" rx="8" ry="6" fill="#c8c8c8"/>
<text class="g" x="1371" y="103" textLength="63" lengthAdjust="spacingAndGlyphs">Shape Fill</text><path class="cg" d="M1439 96h6l-3 3.500z"/>
<text class="g" x="1371" y="130" textLength="93" lengthAdjust="spacingAndGlyphs">Shape Outline</text><path class="cg" d="M1468 123h6l-3 3.500z"/>
<text class="g" x="1371" y="157" textLength="89" lengthAdjust="spacingAndGlyphs">Shape Effects</text><path class="cg" d="M1463 150h6l-3 3.500z"/>
<!-- Editing -->
<circle cx="1504" cy="95.500" r="6" fill="none" stroke="#2b79a8" stroke-width="1.800"/><path d="M1500 100l-7 6" stroke="#2b79a8" stroke-width="2.400"/>
<text x="1491" y="124" style="font-size:10px" fill="#555">ab</text><text x="1500" y="133" style="font-size:10px" fill="#555">ac</text><path d="M1492 126c0 3 2 4 6 4" fill="none" stroke="#2b79a8"/>
<path d="M1497 143v14l3-3 3 6 2-1-3-5h4z" fill="#fff" stroke="#555"/>
<text class="k" x="1515" y="103" textLength="26" lengthAdjust="spacingAndGlyphs">Find</text>
<text class="k" x="1515" y="130" textLength="52" lengthAdjust="spacingAndGlyphs">Replace</text><path class="c" d="M1577 124h6l-3 3.500z"/>
<text class="k" x="1515" y="157" textLength="38" lengthAdjust="spacingAndGlyphs">Select</text><path class="c" d="M1558 150h6l-3 3.500z"/>
<!-- Reverso -->
<path d="M1632 99a12 12 0 1 0 3 12" fill="none" stroke="#d9472b" stroke-width="2"/><path d="M1617 106l6 6 11-15" fill="none" stroke="#2b79a8" stroke-width="2"/>
<path d="M1680 118c1-10 5-20 17-22 0 8-4 12-8 15l-5 1-2 6z" fill="#2b79a8"/><path d="M1674 98h6M1677 95v6M1691 116h4M1693 114v4" stroke="#d9472b" stroke-width="1.200"/>
<text class="k" x="1599" y="145" textLength="48" lengthAdjust="spacingAndGlyphs">Correct</text>
<text class="k" x="1653" y="145" textLength="65" lengthAdjust="spacingAndGlyphs">Rephraser</text>

<!-- editor area -->
<rect x="303" y="193" width="1617" height="754" fill="#e6e6e6"/>
<rect x="457.500" y="208.500" width="1239.500" height="698.500" fill="#fff" stroke="#bfbfbf"/>
<g clip-path="url(#cMain)"><use href="#art"/></g>
<!-- bookmark popup -->
<path d="M1839.500 307.500h49.500v11l10 8.500-10 8.500v26.500h-49.500z" fill="#fff" stroke="#d04a2a"/>
<path d="M1858 324h12v19l-6-7-6 7z" fill="#2f7cab"/>
<!-- v scrollbar -->
<rect x="1900" y="193" width="20" height="668" fill="#d9d9d9"/>
<rect x="1900.500" y="195.500" width="18.500" height="18" fill="#fff" stroke="#bdbdbd"/><path d="M1905 207h9l-4.500-5z" fill="#6e6e6e"/>
<rect x="1900.500" y="244.500" width="18.500" height="33" fill="#fff" stroke="#ababab"/>
<rect x="1900.500" y="861.500" width="18.500" height="18" fill="#fff" stroke="#bdbdbd"/><path d="M1905 867h9l-4.500 6z" fill="#6e6e6e"/>
<path d="M1905 890h9l-4.500-6zM1905 897h9l-4.500-6zM1905 905h9l-4.500 6zM1905 912h9l-4.500 6z" fill="#6e6e6e"/>
<!-- h scrollbar -->
<rect x="307.500" y="924.500" width="1589" height="18" fill="#fff" stroke="#ababab"/>
<path d="M326.500 925v17M1878.500 925v17" stroke="#ababab"/>
<path d="M321 929v9l-5-4.500zM1886 929v9l5-4.500z" fill="#6e6e6e"/>
<rect x="305" y="947" width="1615" height="1" fill="#c6c6c6"/>
<text x="317" y="974" fill="#595959" textLength="145" lengthAdjust="spacingAndGlyphs" style="font-size:17px">Click to add notes</text>
<!-- watermark -->
<g opacity=".13" fill="#666">
<text class="ar" x="845" y="955" textLength="230" lengthAdjust="spacingAndGlyphs" style="font-size:84px;font-weight:700">مستقل</text>
<text x="845" y="992" textLength="230" lengthAdjust="spacingAndGlyphs" style="font-size:38px;font-weight:700">mostaql.com</text>
</g>

<!-- thumbnail pane -->
<rect x="0" y="193" width="302" height="799" fill="#e6e6e6"/>
<rect x="302" y="195" width="1" height="795" fill="#c6c6c6"/>
<rect x="279" y="195" width="19" height="795" fill="#d9d9d9"/>
<rect x="279.500" y="195.500" width="18" height="18" fill="#fff" stroke="#bdbdbd"/><path d="M284 207h9l-4.500-5z" fill="#6e6e6e"/>
<rect x="279.500" y="214.500" width="18" height="344" fill="#fff" stroke="#ababab"/>
<rect x="279.500" y="972.500" width="18" height="17" fill="#fff" stroke="#bdbdbd"/><path d="M284 978h9l-4.500 5z" fill="#6e6e6e"/>
<text x="16" y="229" fill="#c43e1c" style="font-size:17px">1</text>
<text x="15" y="372" fill="#444" style="font-size:17px">2</text>
<text x="15" y="515" fill="#444" style="font-size:17px">3</text>
<text x="15" y="658" fill="#444" style="font-size:17px">4</text>
<text x="15" y="801" fill="#444" style="font-size:17px">5</text>
<text x="15" y="945" fill="#444" style="font-size:17px">6</text>
<!-- t1 -->
<rect x="42.500" y="215.500" width="212" height="121" fill="#fff" stroke="#f1734f" stroke-width="3"/>
<g clip-path="url(#cT1)"><g transform="translate(44,217) scale(.1685) translate(-457,-208)"><use href="#art"/></g></g>
<!-- t2 -->
<rect x="44" y="360" width="209" height="118" fill="#fff" stroke="#c6c6c6" stroke-width="2"/>
<path d="M110 361l8 9 10-9z" fill="#8fbea8"/><path d="M112 362l16 10" stroke="#b55a28"/>
<path d="M45 477V450c10-5 25-3 35 3 8 5 10 15 10 24z" fill="#fad3d5"/><path d="M48 477c3-14 15-18 22-14 5 3 8 8 9 14M55 477c3-8 8-10 12-8 4 2 5 4 6 8" fill="none" stroke="#fff"/>
<path d="M92 450l5 26 -10 -10zM102 455l3 21-6-8z" fill="none" stroke="#b55a28" stroke-width=".6"/>
<circle cx="51" cy="439" r="3.500" fill="#b55a28"/>
<text class="ar" x="65" y="394" fill="#222" textLength="15" lengthAdjust="spacingAndGlyphs" style="font-size:7px;font-weight:700">مقدمة</text>
<g fill="none" stroke="#a0a0a0" stroke-width="1.100" stroke-dasharray="3 1"><path d="M63 404h60M63 417h60M63 430h66"/><path d="M63 408h8M63 421h12"/></g>
<g clip-path="url(#cP2)"><g filter="url(#bl)">
<rect x="140" y="361" width="112" height="116" fill="#d9c3ab"/>
<rect x="176" y="361" width="76" height="62" fill="#f5ebdc"/>
<rect x="140" y="361" width="36" height="56" fill="#8a6f5c"/>
<rect x="200" y="362" width="4" height="50" fill="#d8c3a3"/><rect x="225" y="362" width="5" height="50" fill="#e6dbcc"/><rect x="243" y="362" width="6" height="55" fill="#d8ccbe"/>
<rect x="140" y="417" width="36" height="28" fill="#5f4a3b"/><rect x="238" y="405" width="14" height="38" fill="#7a6450"/>
<rect x="140" y="440" width="112" height="37" fill="#a89f91"/>
<rect x="140" y="459" width="112" height="18" fill="#857c70"/>
<ellipse cx="180" cy="407" rx="10" ry="12" fill="#a8623c"/><path d="M165 450c0-20 5-33 15-33s18 15 20 33z" fill="#d8c2b0"/>
<ellipse cx="208" cy="412" rx="9" ry="9" fill="#c9682f"/><path d="M196 450c0-16 4-25 12-25s20 8 22 25z" fill="#eee3d6"/>
<ellipse cx="229" cy="412" rx="6" ry="7" fill="#9c5b35"/><path d="M222 440c0-10 2-18 7-18s12 4 12 18z" fill="#5a6672"/>
<rect x="150" y="463" width="90" height="5" fill="#b6aea2"/></g></g>
<circle cx="140" cy="464" r="3.500" fill="#e8a356"/>
<!-- t3 -->
<rect x="44" y="503" width="209" height="118" fill="#fff" stroke="#c6c6c6" stroke-width="2"/>
<use href="#corner" transform="translate(0,504)"/>
<g clip-path="url(#cP3)"><rect x="45" y="504" width="103" height="116" fill="url(#p3)"/>
<g filter="url(#bl)"><path d="M65 560h25l6 6-26 2zM90 558h18l8 6-15 3z" fill="#e49a3c"/><ellipse cx="68" cy="573" rx="13" ry="7" fill="#e56d8f"/><rect x="60" y="582" width="28" height="6" fill="#3eb3dd"/><ellipse cx="110" cy="571" rx="12" ry="6" fill="#e78f3b"/><ellipse cx="122" cy="592" rx="20" ry="12" fill="#e9a33f"/><rect x="75" y="600" width="48" height="9" fill="#4bb3d6"/><ellipse cx="108" cy="567" rx="8" ry="3" fill="#41a8c7"/><rect x="142" y="606" width="6" height="10" fill="#4bb3d6"/></g></g>
<text x="161" y="529" fill="#111" style="font-size:12px;font-weight:700;font-family:'Liberation Serif',serif" textLength="14" lengthAdjust="spacingAndGlyphs">01</text>
<text class="ar" x="161" y="546" fill="#222" textLength="58" lengthAdjust="spacingAndGlyphs" style="font-size:8.500px;font-weight:700">الحروف العربية</text>
<!-- t4 -->
<rect x="44" y="646" width="209" height="118" fill="#fff" stroke="#c6c6c6" stroke-width="2"/>
<use href="#corner" transform="translate(0,647)"/>
<text class="ar" x="57" y="666" fill="#222" textLength="67" lengthAdjust="spacingAndGlyphs" style="font-size:8px;font-weight:700">الحروف وأشكالها الملونة</text>
<path d="M57 695h58M57 710h106M57 726h89" fill="none" stroke="#a0a0a0" stroke-width="1.100" stroke-dasharray="3 1"/>
<path d="M47 762c-2-8 0-16 5-20 1 8 0 15-3 20zM55 762l3-6 2 6z" fill="none" stroke="#8fbea8" stroke-width=".7"/>
<!-- t5 -->
<rect x="44" y="789" width="209" height="118" fill="#fff" stroke="#c6c6c6" stroke-width="2"/>
<use href="#corner" transform="translate(0,790)"/>
<text class="ar" x="161" y="809" fill="#222" textLength="72" lengthAdjust="spacingAndGlyphs" style="font-size:8px;font-weight:700">صور وكلمات تبدأ بكل حرف</text>
<path d="M161 838h58M161 853h73M161 869h73M161 876h10" fill="none" stroke="#a0a0a0" stroke-width="1.100" stroke-dasharray="3 1"/>
<g clip-path="url(#cP5)"><rect x="45" y="790" width="103" height="116" fill="#52a8a8"/>
<g filter="url(#bl)"><path d="M45 790h103v20l-103 12z" fill="#6d4632"/><path d="M45 812l103-6v15l-103 10z" fill="#c7c3ae"/>
<rect x="70" y="815" width="16" height="16" fill="#e9dccb"/><rect x="106" y="812" width="17" height="16" fill="#e8dccd"/><rect x="88" y="828" width="18" height="20" fill="#efe2c9"/><ellipse cx="96" cy="838" rx="6" ry="8" fill="#e8922c"/><ellipse cx="114" cy="820" rx="6" ry="5" fill="#d94f2c"/><rect x="114" y="828" width="20" height="18" fill="#e9dccb"/><rect x="116" y="850" width="25" height="30" fill="#e7e3d5"/><rect x="123" y="855" width="11" height="20" fill="#dd4f2e"/><rect x="88" y="852" width="22" height="26" fill="#e6dfd0"/><ellipse cx="100" cy="864" rx="9" ry="9" fill="#d94028"/>
<path d="M45 820c15 5 20 20 22 35 5 0 22 8 30 12-3 15-8 25-15 39H45z" fill="#3a2420"/><path d="M45 870c15 10 35 0 50 2-3 8-18 12-30 24l-20 10z" fill="#e69baa"/></g></g>
<!-- t6 -->
<rect x="44" y="932" width="209" height="70" fill="#fff" stroke="#c6c6c6" stroke-width="2"/>
<g clip-path="url(#cT6)"><path d="M157 933c10 3 20 5 35 13 12 6 20 20 28 24 8 4 20 3 32 0V933z" fill="#fad3d5"/><path d="M165 934c15 4 28 10 38 20 8 8 15 13 25 14M180 934c10 3 20 9 28 15 8 7 15 12 25 13" fill="none" stroke="#fff"/>
<path d="M135 962c-3-8-2-20 0-29h4c0 10-1 20-4 29zM146 960c-4-8-6-18-5-27h4c1 8 3 20 1 27zM152 950c-3-5-5-12-3-17h4zM128 950c-3-5-3-10-3-17h5zM158 944c-3-3-6-7-6-11h5zM118 944c2-3 5-7 6-11h-5z" fill="#b55a28"/>
<circle cx="54" cy="958" r="4" fill="#e8a356"/><path d="M45 962l3 3-3 5z" fill="#b55a28"/>
<path d="M45 934c6 5 15 10 23 8-3 5-10 3-14-1M60 933c8 4 18 6 24 10-8 2-16-1-24-8" fill="none" stroke="#b55a28" stroke-width=".7"/>
<path d="M222 940l15 12M235 934l10 15M228 960l20-8M243 965l8 18" fill="none" stroke="#8fbea8" stroke-width="1.200"/>
<text class="ar" x="110" y="987" fill="#222" textLength="76" lengthAdjust="spacingAndGlyphs" style="font-size:9px;font-weight:700">أسئلة بسيطة للتفاعل</text></g>

<!-- status bar -->
<rect x="0" y="992" width="1920" height="29" fill="#f3f3f3"/>
<rect x="0" y="992" width="1920" height="1" fill="#c6c6c6"/>
<rect x="0" y="1020" width="1920" height="1" fill="#b9aca2"/>
<text class="s" x="8" y="1012" textLength="73" lengthAdjust="spacingAndGlyphs">Slide 1 of 12</text>
<g class="ik"><path d="M102 999h8v13h-8zM110 999h7v13h-7z"/></g><path d="M112 1008l5-6 1.500 1-5 6z" fill="#6a6a6a"/>
<text class="s" x="136" y="1012" textLength="130" lengthAdjust="spacingAndGlyphs">English (United States)</text>
<path d="M1332 1007h11M1332 1011h11M1332 1015h7" stroke="#6a6a6a" fill="none"/><path d="M1334 1004h7l-3.500-4z" fill="#6a6a6a"/>
<text x="1352" y="1012" textLength="35" lengthAdjust="spacingAndGlyphs" fill="#444" style="font-size:13px">Notes</text>
<path d="M1408 998h18v15h-12l-4 5v-5h-2z" fill="#5a5a5a"/>
<text x="1429" y="1012" textLength="62" lengthAdjust="spacingAndGlyphs" fill="#444" style="font-size:13px">Comments</text>
<rect x="1513" y="993" width="41" height="27" fill="#c6c6c6"/>
<g class="ik"><rect x="1525.500" y="999.500" width="15" height="15"/><rect x="1529.500" y="1002.500" width="7" height="5"/><path d="M1526 1010h14"/>
<rect x="1566.500" y="999.500" width="6" height="5"/><rect x="1575.500" y="999.500" width="6" height="5"/><rect x="1566.500" y="1008.500" width="6" height="5"/><rect x="1575.500" y="1008.500" width="6" height="5"/>
<path d="M1608.500 1000h6.500v14h-6.500zM1615 1000h7v14h-7z"/>
<path d="M1650 999h17M1652 999v9h13v-9M1658.500 1008v6M1654 1014h9"/></g>
<rect x="1685" y="1006" width="6" height="3" fill="#6a6a6a"/>
<rect x="1699" y="1007" width="125" height="1" fill="#a0a0a0"/><rect x="1761" y="1001" width="5" height="13" fill="#6a6a6a"/>
<path d="M1830 1002v12M1825 1008h9" stroke="#6a6a6a" stroke-width="2"/>
<text x="1849" y="1012" textLength="32" lengthAdjust="spacingAndGlyphs" fill="#444" style="font-size:13px">104%</text>
<rect x="1898.500" y="1000.500" width="14" height="14" fill="none" stroke="#6a6a6a"/><path d="M1905.500 1002v11M1900 1007.500h11" stroke="#888"/>
</svg>
</body></html>
